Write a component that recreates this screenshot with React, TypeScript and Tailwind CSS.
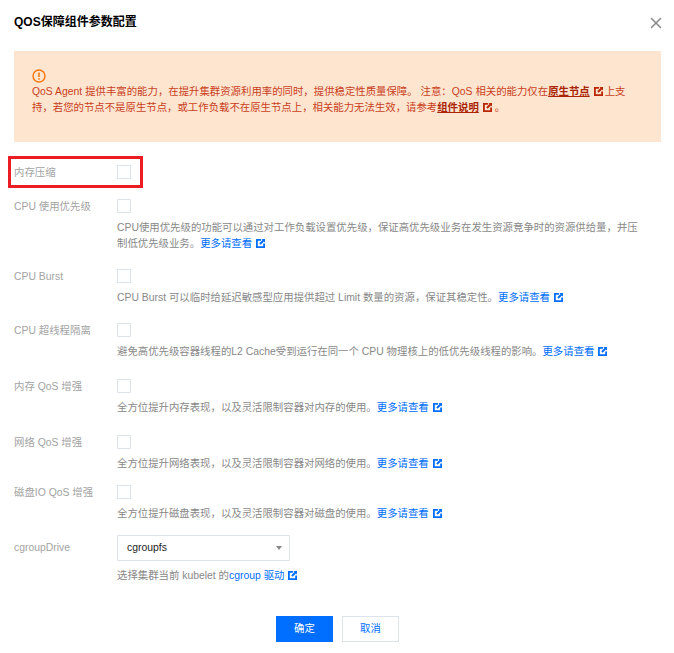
import { X } from 'lucide-react';

const font = { fontFamily: '"Liberation Sans", "Noto Sans CJK SC", sans-serif' };

function LinkIcon({ className }: { className: string }) {
  return (
    <svg viewBox="0 0 10 10" className={`inline-block w-[9px] h-[9px] ml-[4px] align-[-1px] ${className}`}>
      <path fill="currentColor" d="M0 0h5.5v2H2v6h6V5h2v5H0z" />
      <path fill="currentColor" d="M6 0h4v4L8.8 2.8 5.2 6.4 3.6 4.8 7.2 1.2z" />
    </svg>
  );
}

function More({ children = '更多请查看' }: { children?: string }) {
  return (
    <span className="text-[#006eff] whitespace-nowrap">
      {children}
      <LinkIcon className="text-[#006eff]" />
    </span>
  );
}

function Option({
  label,
  gap,
  children,
}: {
  label: string;
  gap: string;
  children?: React.ReactNode;
}) {
  return (
    <div className={`flex ${gap}`}>
      <div className="w-[103px] shrink-0 pt-[1px] leading-[14px] text-[#a3a3a3]">{label}</div>
      <div className="flex-1">
        <div className="w-[14px] h-[14px] border border-[#dde3ea] bg-white" />
        {children && <p className="mt-[7px] leading-[16px] text-[#888]">{children}</p>}
      </div>
    </div>
  );
}

export default function App() {
  return (
    <div className="relative w-[674px] h-[653px] bg-white text-[10.4px]" style={font}>
      <div className="flex items-start justify-between pl-[14px] pr-[9px] pt-[15px] h-[51px]">
        <h1 className="text-[12px] leading-[14px] font-bold text-black">QOS保障组件参数配置</h1>
        <X className="w-[18px] h-[18px] -mt-[1px] text-[#888]" strokeWidth={2} />
      </div>

      <div className="ml-[14px] mr-[13px] h-[91px] bg-[#fee5d0] pl-[18px] pr-[23px] pt-[18px] text-[#c8401c]">
        <svg viewBox="0 0 14 14" className="w-[14px] h-[14px] block">
          <circle cx="7" cy="7" r="6" fill="none" stroke="#f47a14" strokeWidth="1.5" />
          <path d="M7 3.5v4.6" stroke="#f47a14" strokeWidth="1.6" />
          <path d="M7 9.2v1.6" stroke="#f47a14" strokeWidth="1.6" />
        </svg>
        <p className="leading-[16px] mt-[1px]">
          QoS Agent 提供丰富的能力，在提升集群资源利用率的同时，提供稳定性质量保障。 注意：QoS 相关的能力仅在
          <b className="text-[#a82406] underline">原生节点</b>
          <LinkIcon className="text-[#b92505] mr-[2px]" />
          上支持，若您的节点不是原生节点，或工作负载不在原生节点上，相关能力无法生效，请参考
          <b className="text-[#a82406] underline">组件说明</b>
          <LinkIcon className="text-[#b92505] mr-[3px]" />。
        </p>
      </div>

      <div className="pl-[14px] pr-[34px] pt-[23px]">
        <Option label="内存压缩" gap="mb-[19px]" />
        <Option label="CPU 使用优先级" gap="mb-[17px]">
          CPU使用优先级的功能可以通过对工作负载设置优先级，保证高优先级业务在发生资源竞争时的资源供给量，并压制低优先级业务。<More />
        </Option>
        <Option label="CPU Burst" gap="mb-[17px]">
          CPU Burst 可以临时给延迟敏感型应用提供超过 Limit 数量的资源，保证其稳定性。<More />
        </Option>
        <Option label="CPU 超线程隔离" gap="mb-[19px]">
          避免高优先级容器线程的L2 Cache受到运行在同一个 CPU 物理核上的低优先级线程的影响。<More />
        </Option>
        <Option label="内存 QoS 增强" gap="mb-[19px]">
          全方位提升内存表现，以及灵活限制容器对内存的使用。<More />
        </Option>
        <Option label="网络 QoS 增强" gap="mb-[13px]">
          全方位提升网络表现，以及灵活限制容器对网络的使用。<More />
        </Option>
        <Option label="磁盘IO QoS 增强" gap="mb-[13px]">
          全方位提升磁盘表现，以及灵活限制容器对磁盘的使用。<More />
        </Option>

        <div className="flex">
          <div className="w-[103px] shrink-0 pt-[6px] leading-[14px] text-[#a3a3a3]">cgroupDrive</div>
          <div>
            <div className="w-[173px] h-[26px] border border-[#dde3ea] flex items-center justify-between pl-[9px] pr-[7px] text-[#222]">
              <span>cgroupfs</span>
              <span className="w-0 h-0 border-x-[3.5px] border-x-transparent border-t-[4px] border-t-[#888]" />
            </div>
            <p className="mt-[7px] leading-[16px] text-[#888]">
              选择集群当前 kubelet 的<More>cgroup 驱动</More>
            </p>
          </div>
        </div>
      </div>

      <div className="flex justify-center gap-[9px] mt-[32px] ml-[1px]">
        <button className="w-[57px] h-[26px] bg-[#006eff] text-white">确定</button>
        <button className="w-[57px] h-[26px] border border-[#dde3ea] bg-white text-[#006eff]">取消</button>
      </div>

      <div className="absolute left-[8px] top-[156px] w-[135px] h-[32px] border-[3px] border-[#ec1c24]" />
    </div>
  );
}
